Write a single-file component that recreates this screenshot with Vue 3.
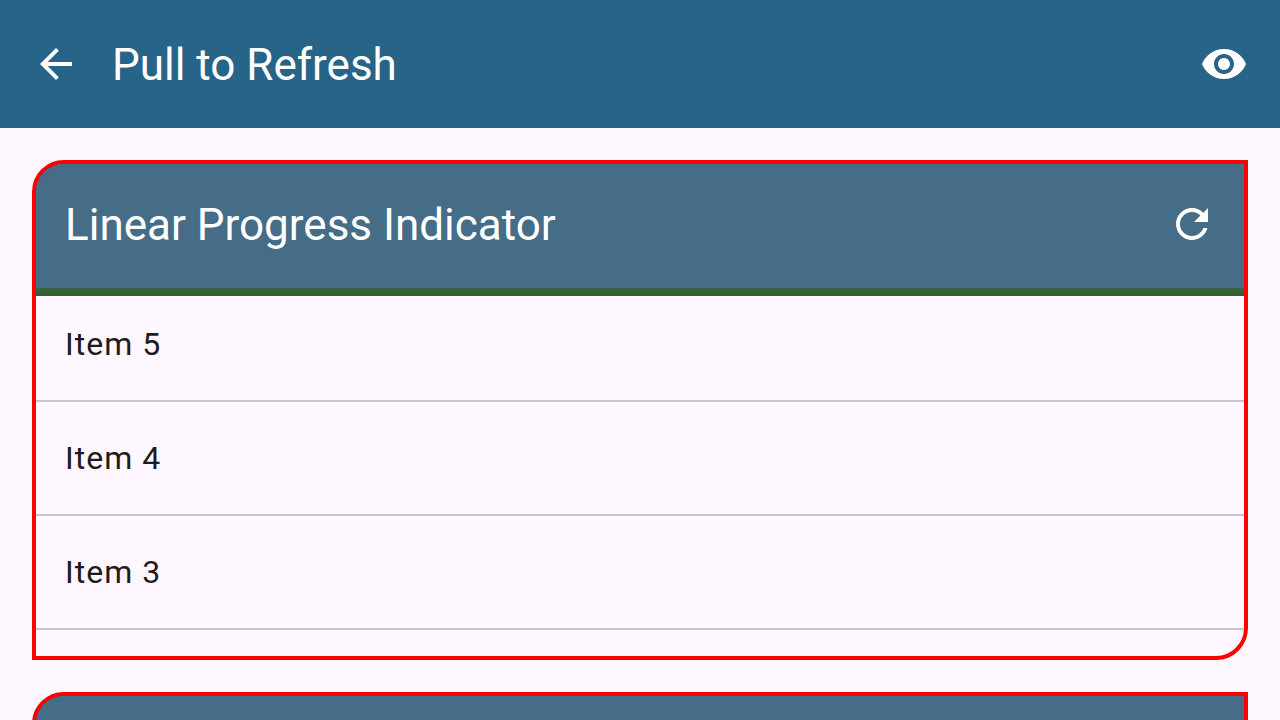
<script setup>
const cards = [
  { id: 'linear', title: 'Linear Progress Indicator', items: ['Item 5', 'Item 4', 'Item 3'] },
  { id: 'next', title: '', items: [] },
]
</script>

<template>
  <div class="page">
    <header class="app-bar">
      <button class="icon-button" type="button" aria-label="Back">
        <svg viewBox="0 0 24 24" aria-hidden="true"><path d="M20 11H7.83l5.59-5.59L12 4l-8 8 8 8 1.41-1.41L7.83 13H20v-2z" /></svg>
      </button>
      <h1 class="title">Pull to Refresh</h1>
      <button class="icon-button" type="button" aria-label="Toggle visibility">
        <svg viewBox="0 0 24 24" aria-hidden="true"><path d="M12 4.5C7 4.5 2.73 7.61 1 12c1.73 4.39 6 7.5 11 7.5s9.27-3.11 11-7.5c-1.73-4.39-6-7.5-11-7.5zM12 17c-2.76 0-5-2.24-5-5s2.24-5 5-5 5 2.24 5 5-2.24 5-5 5zm0-8c-1.66 0-3 1.34-3 3s1.34 3 3 3 3-1.34 3-3-1.34-3-3-3z" /></svg>
      </button>
    </header>

    <main class="content">
      <section v-for="card in cards" :key="card.id" class="card">
        <div class="card-bar">
          <template v-if="card.title">
            <h2 class="title">{{ card.title }}</h2>
            <button class="icon-button" type="button" aria-label="Refresh">
              <svg viewBox="0 0 24 24" aria-hidden="true"><path d="M17.65 6.35C16.2 4.9 14.21 4 12 4c-4.42 0-7.99 3.58-7.99 8s3.57 8 7.99 8c3.73 0 6.84-2.55 7.73-6h-2.08c-.82 2.33-3.04 4-5.65 4-3.31 0-6-2.69-6-6s2.69-6 6-6c1.66 0 3.14.69 4.22 1.78L13 11h7V4l-2.35 2.35z" /></svg>
            </button>
          </template>
        </div>
        <div v-if="card.title" class="progress" role="progressbar" :aria-label="card.title"></div>
        <ul v-if="card.items.length" class="list">
          <li v-for="item in card.items" :key="item" class="item">{{ item }}</li>
        </ul>
      </section>
    </main>
  </div>
</template>

<style>
body {
  background: #fef7ff;
}
</style>

<style scoped>
.page {
  height: 100vh;
  display: flex;
  flex-direction: column;
  overflow: hidden;
  background: #fef7ff;
  color: #1d1b20;
  font-family: Roboto, sans-serif;
}

.app-bar {
  flex: none;
  display: flex;
  align-items: center;
  gap: 32px;
  height: 128px;
  padding: 0 32px;
  box-sizing: border-box;
  background: #286487;
  color: #fff;
}

.title {
  flex: 1;
  margin: 0;
  padding-top: 2px;
  font-size: 44px;
  font-weight: 400;
  line-height: 56px;
}

.icon-button {
  display: flex;
  padding: 0;
  border: 0;
  background: none;
  color: inherit;
  cursor: pointer;
}

.icon-button svg {
  width: 48px;
  height: 48px;
  fill: currentColor;
}

.content {
  flex: 1;
  display: flex;
  flex-direction: column;
  gap: 32px;
  padding: 32px;
  overflow: hidden;
}

.card {
  flex: none;
  min-height: 500px;
  box-sizing: border-box;
  overflow: hidden;
  border: 4px solid #f00;
  border-radius: 32px 0;
  background: linear-gradient(#456d87 124px, #fef7ff 124px);
}

.card-bar {
  display: flex;
  align-items: center;
  height: 124px;
  padding: 0 28px 4px 29px;
  box-sizing: border-box;
  background: #456d87;
  color: #fff;
}

.progress {
  position: relative;
  height: 8px;
  margin-bottom: -8px;
  background: linear-gradient(#3b6450, #33602f 4px);
}

.list {
  margin: 0;
  padding: 0;
  list-style: none;
}

.item {
  height: 112px;
  padding: 0 29px;
  border-bottom: 2px solid #cac4d0;
  font-size: 32px;
  line-height: 112px;
  letter-spacing: 1px;
}
</style>
